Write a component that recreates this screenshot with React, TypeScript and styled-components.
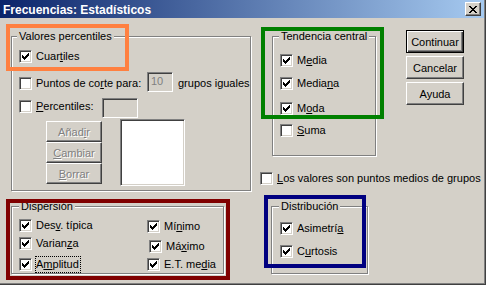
import React from "react";
import styled, { createGlobalStyle, css } from "styled-components";

const GlobalStyle = createGlobalStyle`
  html, body { margin: 0; padding: 0; background: #D4D0C8; }
  body { font-family: "Liberation Sans", Arial, sans-serif; font-size: 11px; color: #000; }
  * { box-sizing: border-box; }
`;

const Window = styled.div`
  position: relative;
  width: 486px;
  height: 285px;
  background: #d4d0c8;
  padding: 0 2px 2px 0;
  box-shadow: inset -1px -1px 0 #404040, inset -2px -2px 0 #808080;
  display: flex;
  flex-direction: column;
  overflow: hidden;
`;

const TitleBar = styled.div`
  height: 18px;
  flex: none;
  display: flex;
  align-items: center;
  justify-content: space-between;
  padding: 0 3px 0 3px;
  background: linear-gradient(to right, #0a246a, #a6caf0);
`;

const TitleText = styled.span`
  color: #fff;
  font-weight: bold;
  font-size: 12px;
  line-height: 14px;
  padding-top: 1px;
  white-space: nowrap;
`;

const CloseButton = styled.div`
  width: 16px;
  height: 14px;
  background: #d4d0c8;
  border: 1px solid;
  border-color: #fff #404040 #404040 #fff;
  box-shadow: inset -1px -1px 0 #808080;
  display: flex;
  align-items: center;
  justify-content: center;
`;

const Body = styled.div`
  display: flex;
  flex-direction: column;
  padding: 12px 0 0 11px;
`;

const Row = styled.div<{ $mt?: number; $ml?: number }>`
  display: flex;
  align-items: flex-start;
  margin-top: ${(p) => p.$mt ?? 0}px;
  margin-left: ${(p) => p.$ml ?? 0}px;
`;

const Column = styled.div<{ $mt?: number; $ml?: number; $w?: number }>`
  display: flex;
  flex-direction: column;
  align-items: flex-start;
  flex: none;
  margin-top: ${(p) => p.$mt ?? 0}px;
  margin-left: ${(p) => p.$ml ?? 0}px;
  ${(p) => (p.$w ? css`width: ${p.$w}px;` : "")}
`;

const Group = styled.div<{ $w: number; $h: number; $mt?: number; $ml?: number; $pl: number }>`
  position: relative;
  flex: none;
  width: ${(p) => p.$w}px;
  height: ${(p) => p.$h}px;
  margin-top: ${(p) => p.$mt ?? 0}px;
  margin-left: ${(p) => p.$ml ?? 0}px;
  padding-left: ${(p) => p.$pl}px;
  border: 1px solid #808080;
  box-shadow: 1px 1px 0 #fff, inset 1px 1px 0 #fff;
  display: flex;
  flex-direction: column;
  align-items: flex-start;
`;

const Legend = styled.span<{ $left: number }>`
  position: absolute;
  top: -7px;
  left: ${(p) => p.$left}px;
  padding: 0 2px;
  line-height: 13px;
  background: #d4d0c8;
  white-space: nowrap;
`;

const CheckLabel = styled.label<{ $mt?: number; $ml?: number; $w?: number }>`
  display: flex;
  align-items: center;
  flex: none;
  height: 13px;
  margin-top: ${(p) => p.$mt ?? 0}px;
  margin-left: ${(p) => p.$ml ?? 0}px;
  ${(p) => (p.$w ? css`width: ${p.$w}px;` : "")}
  white-space: nowrap;
`;

const Box = styled.span`
  width: 13px;
  height: 13px;
  flex: none;
  background: #fff;
  border: 1px solid;
  border-color: #808080 #fff #fff #808080;
  box-shadow: inset 1px 1px 0 #404040, inset -1px -1px 0 #d4d0c8;
  display: flex;
  align-items: flex-start;
  justify-content: flex-start;
  svg { margin: 2px 0 0 2px; display: block; }
`;

const CheckText = styled.span<{ $focus?: boolean }>`
  margin-left: 3px;
  line-height: 13px;
  ${(p) =>
    p.$focus
      ? css`
          border: 1px dotted #000;
          padding: 1px 1px 1px 0;
        `
      : css`
          padding-left: 1px;
        `}
`;

const PlainText = styled.span<{ $mt?: number; $ml?: number }>`
  line-height: 13px;
  margin-top: ${(p) => p.$mt ?? 0}px;
  margin-left: ${(p) => p.$ml ?? 0}px;
  white-space: nowrap;
`;

const Field = styled.div<{ $w: number; $h: number; $white?: boolean; $mt?: number; $ml?: number }>`
  flex: none;
  width: ${(p) => p.$w}px;
  height: ${(p) => p.$h}px;
  margin-top: ${(p) => p.$mt ?? 0}px;
  margin-left: ${(p) => p.$ml ?? 0}px;
  background: ${(p) => (p.$white ? "#fff" : "#d4d0c8")};
  border: 1px solid;
  border-color: #808080 #fff #fff #808080;
  box-shadow: inset 1px 1px 0 #404040, inset -1px -1px 0 #d4d0c8;
  color: #808080;
  line-height: 16px;
  padding-left: 3px;
`;

const SmallButton = styled.div`
  width: 56px;
  height: 21px;
  border: 1px solid;
  border-color: #fff #404040 #404040 #fff;
  box-shadow: inset -1px -1px 0 #808080;
  display: flex;
  align-items: center;
  justify-content: center;
  color: #808080;
  text-shadow: 1px 1px 0 #fff;
`;

const PushButton = styled.div<{ $default?: boolean }>`
  width: 58px;
  height: 23px;
  display: flex;
  align-items: center;
  justify-content: center;
  border: 1px solid;
  ${(p) =>
    p.$default
      ? css`
          border-color: #000;
          box-shadow: inset 1px 1px 0 #fff, inset -1px -1px 0 #404040, inset -2px -2px 0 #808080;
        `
      : css`
          border-color: #fff #404040 #404040 #fff;
          box-shadow: inset -1px -1px 0 #808080;
        `}
`;

const ButtonColumn = styled.div`
  display: flex;
  flex-direction: column;
  gap: 3px;
  margin-left: 30px;
`;

const Mark = styled.div<{ $c: string; $x: number; $y: number; $w: number; $h: number }>`
  position: absolute;
  left: ${(p) => p.$x}px;
  top: ${(p) => p.$y}px;
  width: ${(p) => p.$w}px;
  height: ${(p) => p.$h}px;
  border: 4px solid ${(p) => p.$c};
  pointer-events: none;
`;

const CheckMark = () => (
  <svg width="7" height="7" viewBox="0 0 7 7" shapeRendering="crispEdges">
    <path
      d="M0 2h1v1h1v1h1v-1h1v-1h1v-1h1v-1h1v3h-1v1h-1v1h-1v1h-1v1h-1v-1h-1v-1h-1z"
      fill="#000"
    />
  </svg>
);

const CloseGlyph = () => (
  <svg width="8" height="7" viewBox="0 0 8 7" shapeRendering="crispEdges">
    <path
      d="M0 0h2v1h1v1h2v-1h1v-1h2v1h-1v1h-1v1h-1v1h1v1h1v1h1v1h-2v-1h-1v-1h-2v1h-1v1h-2v-1h1v-1h1v-1h1v-1h-1v-1h-1v-1h-1z"
      fill="#000"
    />
  </svg>
);

type CheckProps = {
  checked?: boolean;
  children: React.ReactNode;
  mt?: number;
  ml?: number;
  w?: number;
  focus?: boolean;
};

const Check = ({ checked, children, mt, ml, w, focus }: CheckProps) => (
  <CheckLabel $mt={mt} $ml={ml} $w={w}>
    <Box>{checked && <CheckMark />}</Box>
    <CheckText $focus={focus}>{children}</CheckText>
  </CheckLabel>
);

export default function App() {
  return (
    <>
      <GlobalStyle />
      <Window>
        <TitleBar>
          <TitleText>Frecuencias: Estadísticos</TitleText>
          <CloseButton>
            <CloseGlyph />
          </CloseButton>
        </TitleBar>
        <Body>
          <Row>
            <Group $w={240} $h={155} $mt={6} $pl={7}>
              <Legend $left={5}>Valores percentiles</Legend>
              <Check checked mt={13}>
                Cuar<u>t</u>iles
              </Check>
              <Row $mt={9}>
                <Check mt={5} w={128}>
                  Puntos de co<u>r</u>te para:
                </Check>
                <Field $w={26} $h={20}>10</Field>
                <PlainText $mt={5} $ml={5}>grupos iguales</PlainText>
              </Row>
              <Row $mt={6}>
                <Check mt={2} w={83}>
                  <u>P</u>ercentiles:
                </Check>
                <Field $w={36} $h={20} />
              </Row>
              <Row $mt={1}>
                <Column $mt={2} $ml={27}>
                  <SmallButton>Añad<u>i</u>r</SmallButton>
                  <SmallButton>
                    <u>C</u>ambiar
                  </SmallButton>
                  <SmallButton>
                    <u>B</u>orrar
                  </SmallButton>
                </Column>
                <Field $w={65} $h={67} $white $ml={18} />
              </Row>
            </Group>
            <Column $ml={21}>
              <Row>
                <Group $w={104} $h={120} $mt={6} $pl={7}>
                  <Legend $left={6}>Tendencia central</Legend>
                  <Check checked mt={17}>
                    M<u>e</u>dia
                  </Check>
                  <Check checked mt={10}>
                    Media<u>n</u>a
                  </Check>
                  <Check checked mt={12}>
                    M<u>o</u>da
                  </Check>
                  <Check mt={9}>
                    <u>S</u>uma
                  </Check>
                </Group>
                <ButtonColumn>
                  <PushButton $default>Continuar</PushButton>
                  <PushButton>Cancelar</PushButton>
                  <PushButton>Ayuda</PushButton>
                </ButtonColumn>
              </Row>
              <Check mt={16} ml={-12}>
                <u>L</u>os valores son puntos medios de grupos
              </Check>
            </Column>
          </Row>
          <Row $mt={15}>
            <Group $w={213} $h={68} $pl={7}>
              <Legend $left={7}>Dispersión</Legend>
              <Row>
                <Column $w={128}>
                  <Check checked mt={12}>
                    Des<u>v</u>. típica
                  </Check>
                  <Check checked mt={5}>
                    Varian<u>z</u>a
                  </Check>
                  <Check checked mt={8} focus>
                    A<u>m</u>plitud
                  </Check>
                </Column>
                <Column>
                  <Check checked mt={13}>
                    Mí<u>n</u>imo
                  </Check>
                  <Check checked mt={7} ml={2}>
                    Má<u>x</u>imo
                  </Check>
                  <Check checked mt={5}>
                    E.T. me<u>d</u>ia
                  </Check>
                </Column>
              </Row>
            </Group>
            <Group $w={97} $h={68} $ml={47} $pl={8}>
              <Legend $left={7}>Distribución</Legend>
              <Check checked mt={15}>
                Asimetrí<u>a</u>
              </Check>
              <Check checked mt={10}>
                C<u>u</u>rtosis
              </Check>
            </Group>
          </Row>
        </Body>
        <Mark $c="#ff8040" $x={6} $y={24} $w={123} $h={47} />
        <Mark $c="#008000" $x={261} $y={27} $w={123} $h={92} />
        <Mark $c="#800000" $x={6} $y={199} $w={224} $h={81} />
        <Mark $c="#000080" $x={264} $y={195} $w={102} $h={73} />
      </Window>
    </>
  );
}
